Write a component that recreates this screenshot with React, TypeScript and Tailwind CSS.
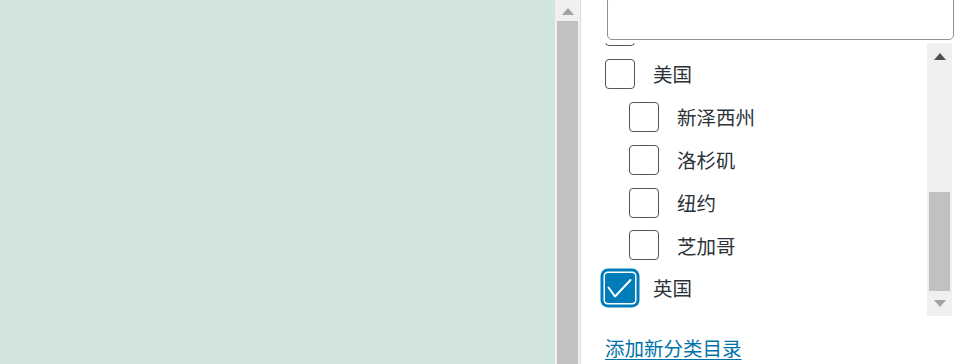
const cjk = { fontFamily: '"Noto Sans CJK SC", "Noto Sans", sans-serif' };

type Item = { label: string; child?: boolean; checked?: boolean };

const items: Item[] = [
  { label: "" },
  { label: "美国" },
  { label: "新泽西州", child: true },
  { label: "洛杉矶", child: true },
  { label: "纽约", child: true },
  { label: "芝加哥", child: true },
  { label: "英国", checked: true },
];

function Box({ checked }: { checked?: boolean }) {
  if (checked) {
    return (
      <span className="flex h-[30px] w-[30px] shrink-0 items-center justify-center rounded-[3px] bg-[#007cba] shadow-[0_0_0_1.5px_#fff,0_0_0_4.5px_#007cba]">
        <svg width="30" height="30" viewBox="0 0 30 30" fill="none">
          <path d="M3.5 14.5 L10 23.5 L25.5 7" stroke="#fff" strokeWidth="2" strokeLinecap="round" strokeLinejoin="round" />
        </svg>
      </span>
    );
  }
  return <span className="h-[30px] w-[30px] shrink-0 rounded-[4px] border border-[#50575e] bg-white" />;
}

function Arrow({ up, color }: { up?: boolean; color: string }) {
  return (
    <svg width="12" height="7" viewBox="0 0 12 7">
      <polygon points={up ? "0,7 12,7 6,0" : "0,0 12,0 6,7"} fill={color} />
    </svg>
  );
}

export default function App() {
  return (
    <div className="flex h-[364px] w-[972px] overflow-hidden bg-white text-[#2c3338]" style={cjk}>
      <div className="w-[555px] shrink-0 bg-[#d1e4dd]" />

      {/* page scrollbar */}
      <div className="flex w-[25px] shrink-0 flex-col bg-[#f0f0f0] px-[2px]">
        <div className="flex h-[21px] items-center justify-center pt-[1px]">
          <Arrow up color="#a3a3a3" />
        </div>
        <div className="flex-1 bg-[#c1c1c1]" />
      </div>

      <div className="flex w-[392px] shrink-0 flex-col border-l border-[#dcdcde]">
        <div className="ml-[26px] mr-[18px] -mt-[4px] h-[44px] shrink-0 rounded-[5px] border border-[#8c8f94] bg-white" />

        <div className="mt-[3px] flex h-[273px] shrink-0">
          <div className="flex-1 overflow-hidden pl-[24px]">
            <div className="-mt-[33px]">
              {items.map((it, i) => (
                <div
                  key={i}
                  className={`flex h-[42.8px] items-center gap-[18px] text-[19.5px] leading-none ${it.child ? "pl-[24px]" : ""}`}
                >
                  <Box checked={it.checked} />
                  <span>{it.label}</span>
                </div>
              ))}
            </div>
          </div>

          {/* list scrollbar */}
          <div className="mr-[20px] flex w-[25px] shrink-0 flex-col bg-[#f0f0f0] px-[2px]">
            <div className="flex h-[26px] items-center justify-center pt-[1px]">
              <Arrow up color="#505050" />
            </div>
            <div className="h-[123px]" />
            <div className="h-[99px] bg-[#c1c1c1]" />
            <div className="flex flex-1 items-center justify-center">
              <Arrow color="#a3a3a3" />
            </div>
          </div>
        </div>

        <div className="mt-[19px] pl-[24px]">
          <a href="#" className="text-[19.5px] leading-[26px] text-[#0073aa] underline underline-offset-[3px]">
            添加新分类目录
          </a>
        </div>
      </div>
    </div>
  );
}
